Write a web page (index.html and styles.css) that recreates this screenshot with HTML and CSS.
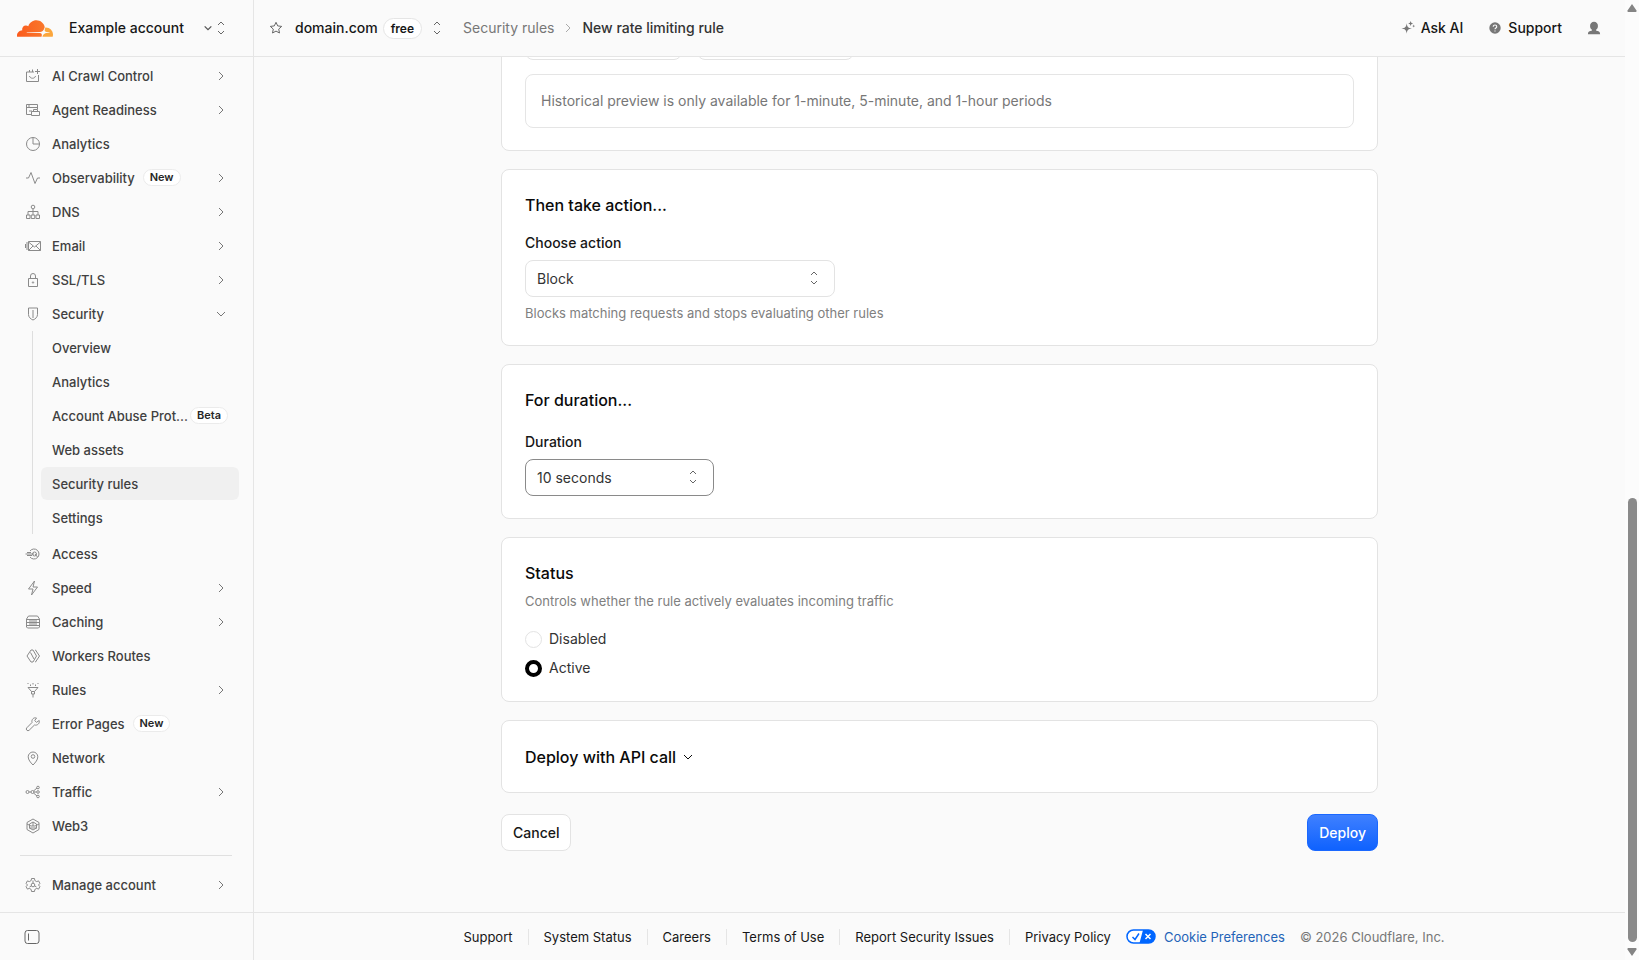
FILE: index.html
```html
<!DOCTYPE html>
<html lang="en">
<head>
  <meta charset="UTF-8">
  <meta name="viewport" content="width=device-width, initial-scale=1">
  <title>New rate limiting rule</title>
  <link rel="stylesheet" href="styles.css">
</head>
<body>
  <!-- Icon sprite -->
  <svg class="sprite" aria-hidden="true">
    <symbol id="i-right" viewBox="0 0 12 12"><path d="M4 2l4 4-4 4"/></symbol>
    <symbol id="i-down" viewBox="0 0 12 12"><path d="M2 4l4 4 4-4"/></symbol>
    <symbol id="i-updown" viewBox="0 0 12 16"><path d="M3 5l3-3 3 3M3 11l3 3 3-3"/></symbol>
    <symbol id="i-crawl" viewBox="0 0 16 16"><path d="M9 4H1.500v9.500h12V7M4.500 4V2M7.500 1.500V4M4.500 8c.5 3 5.500 3 6 0M12.500 1v5M10 3.500h5"/></symbol>
    <symbol id="i-agent" viewBox="0 0 16 16"><path d="M6 12.500H1.500v-10h11V7M1.500 5.500h11M4 2.500v3M4 9h3M6.500 9.500h8v4h-8zM8.500 9.500v-2h4v2"/></symbol>
    <symbol id="i-clock" viewBox="0 0 16 16"><circle cx="8" cy="8" r="6.500"/><path d="M8 1.500V8h6.500"/></symbol>
    <symbol id="i-pulse" viewBox="0 0 16 16"><path d="M1 8h2.500L6 2.500 10 13.500l2.500-5.500H15"/></symbol>
    <symbol id="i-dns" viewBox="0 0 16 16"><circle cx="8" cy="3" r="1.800"/><path d="M8 5v6M3 11V7.500h10V11M1.500 11h3.500v3.500H1.500zM6.250 11h3.500v3.500h-3.500zM11 11h3.500v3.500H11z"/></symbol>
    <symbol id="i-mail" viewBox="0 0 16 16"><path d="M3.500 3.500h12v9h-12zM3.500 4l6 5 6-5M3.500 12.500L8 8M15.500 12.500L11 8M2 4v8M.5 6v4"/></symbol>
    <symbol id="i-lock" viewBox="0 0 16 16"><path d="M3.500 6.500h9v8h-9zM5.500 6.500V4a2.500 2.500 0 0 1 5 0v2.500"/><circle cx="8" cy="10.500" r=".7"/></symbol>
    <symbol id="i-shield" viewBox="0 0 16 16"><path d="M3.500 2h9v6.500c0 2.500-2 4.500-4.500 5.500-2.500-1-4.500-3-4.500-5.500zM8 4v8"/></symbol>
    <symbol id="i-access" viewBox="0 0 16 16"><path d="M5 5a5 5 0 1 1 0 6M.5 8H9M2 6.500h4M2 9.500h5"/><circle cx="9.500" cy="8" r="2"/><path d="M10 8l2.500 3"/></symbol>
    <symbol id="i-bolt" viewBox="0 0 16 16"><path d="M9.500 1L3.500 9H8l-1.500 6 6-8H8z"/></symbol>
    <symbol id="i-cache" viewBox="0 0 16 16"><path d="M3.500 2h9l2 3v8l-1 1h-11l-1-1V5zM1.500 5.500h13M1.500 8.500h13M1.500 11.500h13M4 7h8M4 10h8"/></symbol>
    <symbol id="i-workers" viewBox="0 0 16 16"><path d="M6 2L2 8l4 6M6 2h2l3.500 6L8 14H6M10 2h.5L14.500 8l-4 6H10M5.500 4.500L9 11"/></symbol>
    <symbol id="i-rules" viewBox="0 0 16 16"><path d="M3 5.500h10L9.500 9.500h-3zM6.500 9.500V12h3V9.500M8 12v3.500M3 1v1M5.500 2.500v1.500M8 1v1.500M10.500 2.500v1.500M13 1v1"/></symbol>
    <symbol id="i-wrench" viewBox="0 0 16 16"><path d="M14.200 4.500l-2.700 1.800-1.800-1.700L11.500 2C8.800 1 6.300 3.500 7 6.500L1.800 11.800a1.600 1.600 0 0 0 2.400 2.400L9.500 9c3 .8 5.500-1.800 4.700-4.500z"/></symbol>
    <symbol id="i-pin" viewBox="0 0 16 16"><path d="M8 15c-2.500-2.500-4.800-5.300-4.800-8.200a4.800 4.800 0 0 1 9.600 0C12.800 9.700 10.500 12.500 8 15z"/><circle cx="8" cy="6.500" r="1.800"/></symbol>
    <symbol id="i-traffic" viewBox="0 0 16 16"><circle cx="2.500" cy="8" r="1.500"/><circle cx="7.500" cy="8" r="1.500"/><circle cx="13" cy="3.500" r="1.300"/><circle cx="13" cy="8" r="1.300"/><circle cx="13" cy="12.500" r="1.300"/><path d="M4 8h2M9 8h2.500M8.500 7L12 4M8.500 9l3.500 3"/></symbol>
    <symbol id="i-web3" viewBox="0 0 16 16"><path d="M8 1l6 3.500v7L8 15l-6-3.500v-7zM8 4l3.500 2v4L8 12l-3.500-2V6zM2 6l4 2h4l4-2M4 10h8M8 4v4"/></symbol>
    <symbol id="i-gear" viewBox="0 0 16 16"><path d="M6.200 3.500L6.500 1.500h3l.3 2 1.900 1.100 1.900-.7 1.300 2.500L13.500 8l1.400 1.600-1.300 2.500-1.900-.7-1.900 1.100-.3 2h-3l-.3-2-1.900-1.100-1.900.7-1.300-2.500L2.500 8 1.100 6.400l1.300-2.500 1.900.7z"/><circle cx="8" cy="8" r="1.800"/><path d="M8 3.500v2.700M4.500 10l2-1.200M11.500 10l-2-1.200"/></symbol>
    <symbol id="i-panel" viewBox="0 0 16 16"><rect x="1" y="1.500" width="14" height="13" rx="2.500"/><path d="M4.500 4.500v7"/></symbol>
    <symbol id="i-star" viewBox="0 0 16 16"><path d="M8 2.300l1.700 3.600 4 .5-3 2.700.8 3.900L8 11.100 4.500 13l.8-3.900-3-2.700 4-.5z"/></symbol>
  </svg>

  <div class="page">
    <div class="app">
      <aside class="sidebar">
        <div class="account">
          <svg class="logo" viewBox="0 6.500 24 11" role="img" aria-label="Cloudflare">
            <defs>
              <linearGradient id="cloud" x1="0" y1="0" x2="1" y2="0">
                <stop offset="0" stop-color="#fb5a1c"/>
                <stop offset="1" stop-color="#f9782c"/>
              </linearGradient>
            </defs>
            <path fill="url(#cloud)" d="M16.5088 16.8447c.1475-.5068.0908-.9707-.1553-1.3154-.2246-.3164-.6045-.499-1.0615-.5205l-8.6592-.1123a.1559.1559 0 0 1-.1333-.0713c-.0283-.042-.0351-.0986-.021-.1553.0278-.084.1123-.1484.2036-.1562l8.7359-.1123c1.0351-.0489 2.1601-.8868 2.5537-1.9136l.499-1.3013c.0215-.0561.0293-.1128.0147-.168-.5625-2.5463-2.835-4.4453-5.5499-4.4453-2.5039 0-4.6284 1.6177-5.3876 3.8614-.4927-.3658-1.1187-.5625-1.794-.499-1.2026.119-2.1665 1.083-2.2861 2.2856-.0283.31-.0069.6128.0635.894C1.5683 13.171 0 14.7754 0 16.752c0 .1748.0142.3515.0352.5273.0141.083.0844.1475.1689.1475h15.9814c.0909 0 .1758-.0645.2032-.1553z"/>
            <path fill="#fba63c" d="M19.2656 11.2813c-.0771 0-.1611 0-.2383.0112-.0566 0-.1054.0415-.127.0976l-.3378 1.1744c-.1475.5068-.0918.9707.1543 1.3164.2256.3164.6055.498 1.0625.5195l1.8437.1133c.0557 0 .1055.0263.1329.0703.0283.043.0351.1074.0214.1562-.0283.084-.1132.1485-.204.1553l-1.921.1123c-1.041.0488-2.1582.8867-2.5527 1.914l-.1406.3585c-.0283.0713.0215.1416.0986.1416h6.5977c.0771 0 .1474-.0489.169-.126.1122-.4082.1757-.837.1757-1.2803 0-2.6025-2.125-4.727-4.7344-4.727"/>
          </svg>
          <span class="account-name">Example account</span>
          <button class="switcher" type="button" aria-label="Switch account">
            <svg class="icon-xs"><use href="#i-down"/></svg>
            <svg class="updown"><use href="#i-updown"/></svg>
          </button>
        </div>

        <nav class="nav">
          <button class="item" type="button"><svg class="icon"><use href="#i-crawl"/></svg>AI Crawl Control<svg class="chev"><use href="#i-right"/></svg></button>
          <button class="item" type="button"><svg class="icon"><use href="#i-agent"/></svg>Agent Readiness<svg class="chev"><use href="#i-right"/></svg></button>
          <a class="item" href="#"><svg class="icon"><use href="#i-clock"/></svg>Analytics</a>
          <button class="item" type="button"><svg class="icon"><use href="#i-pulse"/></svg>Observability<span class="tag">New</span><svg class="chev"><use href="#i-right"/></svg></button>
          <button class="item" type="button"><svg class="icon"><use href="#i-dns"/></svg>DNS<svg class="chev"><use href="#i-right"/></svg></button>
          <button class="item" type="button"><svg class="icon"><use href="#i-mail"/></svg>Email<svg class="chev"><use href="#i-right"/></svg></button>
          <button class="item" type="button"><svg class="icon"><use href="#i-lock"/></svg>SSL/TLS<svg class="chev"><use href="#i-right"/></svg></button>
          <button class="item" type="button" aria-expanded="true"><svg class="icon"><use href="#i-shield"/></svg>Security<svg class="chev"><use href="#i-down"/></svg></button>
          <div class="subnav">
            <a class="subitem" href="#">Overview</a>
            <a class="subitem" href="#">Analytics</a>
            <a class="subitem" href="#"><span>Account Abuse Prot...</span><span class="tag">Beta</span></a>
            <a class="subitem" href="#">Web assets</a>
            <a class="subitem active" href="#">Security rules</a>
            <a class="subitem" href="#">Settings</a>
          </div>
          <a class="item" href="#"><svg class="icon"><use href="#i-access"/></svg>Access</a>
          <button class="item" type="button"><svg class="icon"><use href="#i-bolt"/></svg>Speed<svg class="chev"><use href="#i-right"/></svg></button>
          <button class="item" type="button"><svg class="icon"><use href="#i-cache"/></svg>Caching<svg class="chev"><use href="#i-right"/></svg></button>
          <a class="item" href="#"><svg class="icon"><use href="#i-workers"/></svg>Workers Routes</a>
          <button class="item" type="button"><svg class="icon"><use href="#i-rules"/></svg>Rules<svg class="chev"><use href="#i-right"/></svg></button>
          <a class="item" href="#"><svg class="icon"><use href="#i-wrench"/></svg>Error Pages<span class="tag">New</span></a>
          <a class="item" href="#"><svg class="icon"><use href="#i-pin"/></svg>Network</a>
          <button class="item" type="button"><svg class="icon"><use href="#i-traffic"/></svg>Traffic<svg class="chev"><use href="#i-right"/></svg></button>
          <a class="item" href="#"><svg class="icon"><use href="#i-web3"/></svg>Web3</a>
          <hr class="nav-line">
          <button class="item" type="button"><svg class="icon"><use href="#i-gear"/></svg>Manage account<svg class="chev"><use href="#i-right"/></svg></button>
        </nav>

        <div class="sidebar-foot">
          <button class="collapse" type="button" aria-label="Collapse sidebar"><svg class="icon"><use href="#i-panel"/></svg></button>
        </div>
      </aside>

      <div class="content">
        <header class="topbar">
          <button class="star" type="button" aria-label="Star domain"><svg class="icon"><use href="#i-star"/></svg></button>
          <span class="domain">domain.com</span>
          <span class="plan">free</span>
          <button class="domain-switch" type="button" aria-label="Switch domain"><svg class="updown"><use href="#i-updown"/></svg></button>
          <nav class="crumbs">
            <a href="#">Security rules</a>
            <svg class="icon-sm"><use href="#i-right"/></svg>
            <span>New rate limiting rule</span>
          </nav>
          <div class="tools">
            <a class="tool" href="#">
              <svg class="fill-icon" viewBox="0 0 16 16"><path d="M6.500 2.500C7 6.800 8.200 8 12.500 8.500 8.200 9 7 10.200 6.500 14.500 6 10.200 4.800 9 .5 8.500 4.800 8 6 6.800 6.500 2.500z"/><path d="M11 0l.8 2 2 .8-2 .8-.8 2-.8-2-2-.8 2-.8zM14.500 4l.5 1.300 1.200.4-1.200.5-.5 1.200-.5-1.200-1.200-.5 1.200-.4z"/></svg>
              Ask AI
            </a>
            <a class="tool" href="#">
              <svg class="fill-icon" viewBox="0 0 16 16"><circle cx="8" cy="8" r="6.500"/><path class="mark" d="M6 6.500C6 4 10 4 10 6.500 10 8 8 7.800 8 9.300M8 10.800v1.200"/></svg>
              Support
            </a>
            <button class="user" type="button" aria-label="User menu">
              <svg class="fill-icon" viewBox="0 0 16 16"><path d="M8 1a4.500 4.500 0 0 1 4.500 4.700c0 2-.8 3.200-2 4.100V11c2.500.2 4.500 1 4.500 4H1c0-3 2-3.800 4.500-4V9.800c-1.200-.9-2-2.100-2-4.100A4.500 4.500 0 0 1 8 1z"/></svg>
            </button>
          </div>
        </header>

        <main class="main">
          <form class="rule-form">
            <section class="card">
              <div class="rate-row">
                <select class="input" aria-label="Requests"></select>
                <select class="input" aria-label="Period"></select>
              </div>
              <p class="notice">Historical preview is only available for 1-minute, 5-minute, and 1-hour periods</p>
            </section>

            <section class="card">
              <h2>Then take action...</h2>
              <label class="field-label" for="action">Choose action</label>
              <div class="select wide">
                <select class="input" id="action"><option>Block</option></select>
                <svg class="updown"><use href="#i-updown"/></svg>
              </div>
              <p class="help">Blocks matching requests and stops evaluating other rules</p>
            </section>

            <section class="card duration">
              <h2>For duration...</h2>
              <label class="field-label" for="duration">Duration</label>
              <div class="select">
                <select class="input focused" id="duration"><option>10 seconds</option></select>
                <svg class="updown"><use href="#i-updown"/></svg>
              </div>
            </section>

            <section class="card">
              <h2>Status</h2>
              <p class="help">Controls whether the rule actively evaluates incoming traffic</p>
              <div class="radios">
                <label class="radio"><input type="radio" name="status">Disabled</label>
                <label class="radio"><input type="radio" name="status" checked>Active</label>
              </div>
            </section>

            <section class="card">
              <button class="api-toggle" type="button">Deploy with API call<svg class="icon-sm"><use href="#i-down"/></svg></button>
            </section>

            <div class="actions">
              <button class="btn" type="button">Cancel</button>
              <button class="btn primary" type="button">Deploy</button>
            </div>
          </form>
        </main>

        <footer class="footer">
          <a href="#">Support</a>
          <a href="#">System Status</a>
          <a href="#">Careers</a>
          <a href="#">Terms of Use</a>
          <a href="#">Report Security Issues</a>
          <a href="#">Privacy Policy</a>
          <a class="cookies" href="#">
            <svg class="privacy" viewBox="0 0 30 15">
              <rect x="1" y="1" width="28" height="13" rx="6.500" fill="#fff" stroke="#0066ff" stroke-width="1.500"/>
              <path d="M17 1h5.500a6.500 6.500 0 0 1 0 13H13.500z" fill="#0066ff"/>
              <path d="M6.500 8l2.500 2.500L13 4.500" fill="none" stroke="#0066ff" stroke-width="1.500"/>
              <path d="M19.500 5l5 5M24.500 5l-5 5" stroke="#fff" stroke-width="1.500"/>
            </svg>
            Cookie Preferences
          </a>
          <span class="copyright">© 2026 Cloudflare, Inc.</span>
        </footer>
      </div>
    </div>

    <div class="scrollbar" aria-hidden="true">
      <svg class="arrow" viewBox="0 0 10 8"><path d="M5 0l4.500 6.500a1 1 0 0 1-1 1.500h-7a1 1 0 0 1-1-1.500z"/></svg>
      <div class="track"><div class="thumb"></div></div>
      <svg class="arrow" viewBox="0 0 10 8"><path d="M5 8L.5 1.500A1 1 0 0 1 1.500 0h7a1 1 0 0 1 1 1.500z"/></svg>
    </div>
  </div>
</body>
</html>
```

FILE: styles.css
```css
* {
  box-sizing: border-box;
}

body {
  margin: 0;
  font-family: 'Inter', sans-serif;
  font-size: 14px;
  line-height: 20px;
  color: #171717;
  background: #fafafa;
}

button, select, input {
  font: inherit;
  color: inherit;
}

button {
  padding: 0;
  border: none;
  background: none;
  cursor: pointer;
}

a {
  color: inherit;
  text-decoration: none;
}

h2, p {
  margin: 0;
}

svg {
  flex: none;
  fill: none;
  stroke: currentColor;
}

.sprite {
  display: none;
}

.page {
  display: flex;
  height: 100vh;
}

.app {
  flex: 1;
  min-width: 0;
  display: flex;
}

/* icons */
.icon {
  width: 16px;
  height: 16px;
}

.icon-sm, .chev {
  width: 12px;
  height: 12px;
}

.icon-xs {
  width: 10px;
  height: 10px;
  stroke-width: 1.5;
}

.updown {
  width: 12px;
  height: 16px;
  color: #666;
}

.fill-icon {
  width: 14px;
  height: 14px;
  fill: #777;
  stroke: none;
  overflow: visible;
}

.fill-icon .mark {
  fill: none;
  stroke: #fafafa;
  stroke-width: 1.3;
}

/* sidebar */
.sidebar {
  flex: none;
  width: 254px;
  display: flex;
  flex-direction: column;
  border-right: 1px solid #e5e5e5;
}

.account {
  flex: none;
  height: 57px;
  display: flex;
  align-items: center;
  padding: 0 26px 0 17px;
  border-bottom: 1px solid #e5e5e5;
}

.logo {
  width: 36px;
  height: 17px;
  stroke: none;
}

.account-name {
  margin-left: 16px;
  font-weight: 500;
}

.switcher {
  display: flex;
  align-items: center;
  gap: 2px;
  margin-left: auto;
  color: #555;
}

.nav {
  flex: 1;
  min-height: 0;
  overflow: hidden;
  display: flex;
  flex-direction: column;
  gap: 1px;
  padding: 2px 14px 0;
}

.item, .subitem {
  flex: none;
  display: flex;
  align-items: center;
  height: 33px;
  font-size: 13px;
  font-weight: 500;
  color: #404040;
  border-radius: 6px;
  white-space: nowrap;
}

.item {
  padding: 0 12px 0 11px;
}

.item .icon {
  margin-right: 11px;
  color: #8a8a8a;
}

.item .chev {
  margin-left: auto;
  color: #777;
}

.tag {
  margin-left: 8px;
  padding: 0 6px;
  font-size: 11px;
  line-height: 15px;
  font-weight: 600;
  color: #262626;
  background: #fff;
  border: 1px solid #ebebeb;
  border-radius: 9px;
}

.subnav {
  flex: none;
  display: flex;
  flex-direction: column;
  gap: 1px;
  margin: 0 0 2px 18px;
  padding-left: 8px;
  border-left: 1px solid #dedede;
}

.subitem {
  padding: 0 11px;
}

.subitem.active {
  background: #f0f0f0;
}

.subitem .tag {
  margin-left: auto;
}

.nav-line {
  flex: none;
  align-self: stretch;
  margin: 12px 7px 11px 6px;
  border: none;
  border-top: 1px solid #e0e0e0;
}

.sidebar-foot {
  flex: none;
  height: 48px;
  display: flex;
  align-items: center;
  padding-left: 24px;
  border-top: 1px solid #e5e5e5;
}

.collapse {
  display: flex;
  color: #666;
}

/* top bar */
.content {
  flex: 1;
  min-width: 0;
  display: flex;
  flex-direction: column;
}

.topbar {
  flex: none;
  height: 57px;
  display: flex;
  align-items: center;
  padding: 0 24px 0 14px;
  border-bottom: 1px solid #e5e5e5;
}

.star, .domain-switch, .user {
  display: flex;
  color: #666;
}

.domain {
  margin-left: 11px;
  font-weight: 500;
}

.plan {
  margin-left: 5px;
  padding: 0 7px;
  font-size: 12px;
  line-height: 19px;
  font-weight: 600;
  background: #fff;
  border: 1px solid #e5e5e5;
  border-radius: 11px;
}

.domain-switch {
  margin-left: 9px;
}

.crumbs {
  display: flex;
  align-items: center;
  gap: 8px;
  margin-left: 20px;
  color: #777;
}

.crumbs .icon-sm {
  color: #aaa;
}

.crumbs span {
  font-weight: 500;
  color: #333;
}

.tools {
  display: flex;
  align-items: center;
  gap: 25px;
  margin-left: auto;
}

.tool {
  display: flex;
  align-items: center;
  gap: 6px;
  font-weight: 500;
}

/* rule form, kept at its end */
.main {
  flex: 1;
  min-height: 0;
  overflow: hidden;
  display: flex;
  flex-direction: column;
  justify-content: flex-end;
  padding: 0 24px 61px;
}

.rule-form {
  width: 100%;
  max-width: 877px;
  margin: 0 auto;
  display: flex;
  flex-direction: column;
  gap: 18px;
}

.card {
  padding: 23px 23px 22px;
  background: #fff;
  border: 1px solid #e3e3e3;
  border-radius: 8px;
}

.card h2, .api-toggle {
  font-size: 16px;
  line-height: 24px;
  font-weight: 500;
  color: #0a0a0a;
}

.rate-row {
  display: flex;
  gap: 15px;
  margin-bottom: 14px;
}

.rate-row .input {
  width: 157px;
}

.notice {
  padding: 16px 15px;
  color: #777;
  border: 1px solid #e5e5e5;
  border-radius: 8px;
}

.field-label {
  display: block;
  margin: 16px 0 7px;
  font-weight: 500;
}

.duration .field-label {
  margin-top: 20px;
}

.select {
  position: relative;
  width: 189px;
}

.select.wide {
  width: 310px;
}

.select .updown {
  position: absolute;
  right: 15px;
  top: 10px;
  pointer-events: none;
}

.input {
  display: block;
  width: 100%;
  height: 37px;
  padding: 0 11px;
  color: #333;
  background: #fff;
  border: 1px solid #e3e3e3;
  border-radius: 8px;
  appearance: none;
}

.input.focused {
  border-color: #8a8a8a;
}

.help {
  margin-top: 6px;
  font-size: 13px;
  color: #808080;
}

.radios {
  display: flex;
  flex-direction: column;
  align-items: flex-start;
  gap: 9px;
  margin-top: 18px;
  padding-bottom: 1px;
}

.radio {
  display: flex;
  align-items: center;
  gap: 7px;
  color: #333;
}

.radio input {
  appearance: none;
  width: 17px;
  height: 17px;
  margin: 0;
  background: #fff;
  border: 1px solid #e3e3e3;
  border-radius: 50%;
}

.radio input:checked {
  border: 4px solid #000;
}

.api-toggle {
  display: flex;
  align-items: center;
  gap: 6px;
  padding: 1px 0;
}

.actions {
  display: flex;
  justify-content: space-between;
  margin-top: 3px;
}

.btn {
  height: 37px;
  padding: 0 11px;
  font-weight: 500;
  background: #fff;
  border: 1px solid #e3e3e3;
  border-radius: 8px;
}

.btn.primary {
  color: #fff;
  background: linear-gradient(#3f80ff, #0f62fe);
  border-color: #1a68ff;
}

/* footer */
.footer {
  flex: none;
  height: 48px;
  display: flex;
  align-items: center;
  justify-content: center;
  padding-left: 14px;
  font-size: 13px;
  line-height: 16px;
  border-top: 1px solid #e5e5e5;
  white-space: nowrap;
}

.footer a {
  padding: 0 15px;
  border-left: 1px solid #e5e5e5;
}

.footer a:first-child, .footer .cookies {
  border-left: none;
}

.footer .cookies {
  display: flex;
  align-items: center;
  gap: 8px;
  padding-left: 0;
  color: #1f63b8;
}

.privacy {
  width: 30px;
  height: 15px;
  stroke: none;
}

.copyright {
  color: #777;
}

/* scrollbar */
.scrollbar {
  flex: none;
  width: 14px;
  display: flex;
  flex-direction: column;
  align-items: center;
  gap: 6px;
  padding: 4px 0;
  background: #fcfcfc;
}

.arrow {
  width: 10px;
  height: 8px;
  fill: #858585;
  stroke: none;
}

.track {
  flex: 1;
  width: 9px;
  display: flex;
  flex-direction: column;
  justify-content: flex-end;
}

.thumb {
  height: 48%;
  background: #8a8a8a;
  border-radius: 5px;
}
```
